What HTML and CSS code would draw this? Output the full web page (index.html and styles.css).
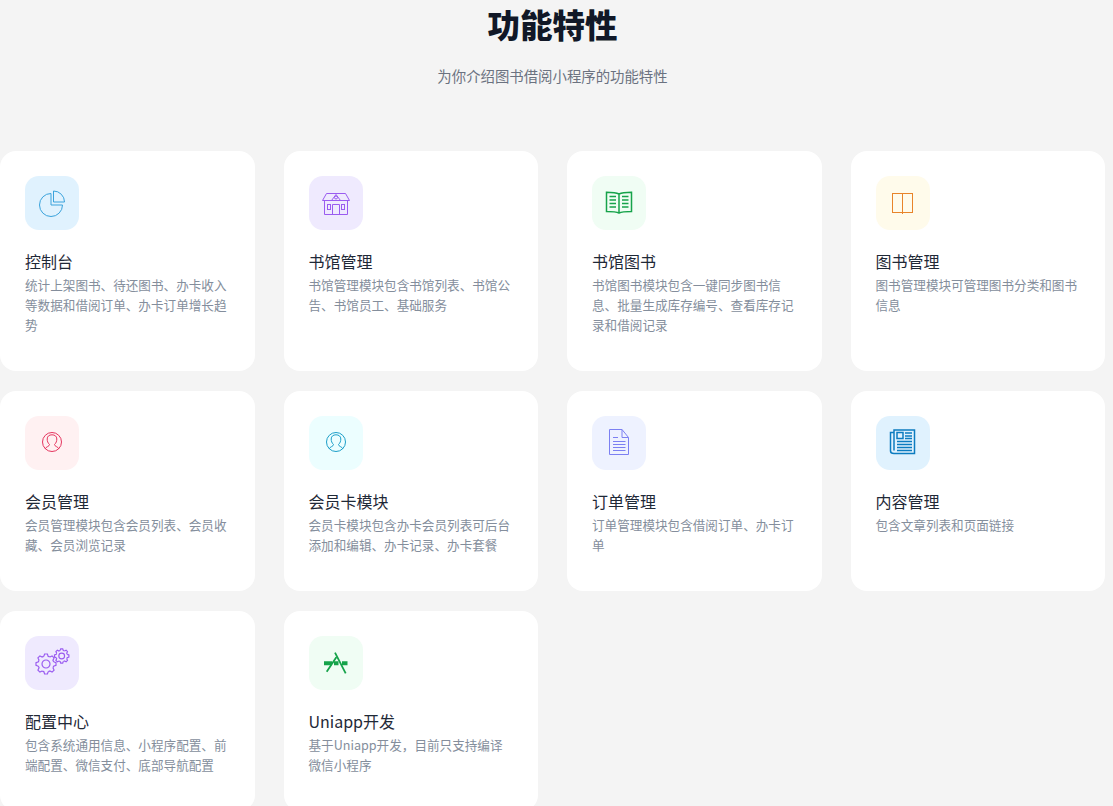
FILE: index.html
```html
<!DOCTYPE html>
<html lang="zh-CN">
<head>
  <meta charset="UTF-8">
  <meta name="viewport" content="width=device-width, initial-scale=1.0">
  <title>功能特性</title>
  <link rel="stylesheet" href="styles.css">
</head>
<body>
  <div class="page">
    <div class="head">
      <h1>功能特性</h1>
      <p>为你介绍图书借阅小程序的功能特性</p>
    </div>

    <div class="grid">
      <div class="card">
        <div class="icon sky">
          <svg viewBox="0 0 28 28"><path d="M13 4.500A11.500 11.500 0 1 0 24.500 16H13z"/><path d="M15.500 13V2a11 11 0 0 1 11 11z"/></svg>
        </div>
        <h3>控制台</h3>
        <p>统计上架图书、待还图书、办卡收入等数据和借阅订单、办卡订单增长趋势</p>
      </div>
      <div class="card">
        <div class="icon violet">
          <svg viewBox="0 0 28 28"><path d="M.5 11.500 4.500 4.500H23.500L27.500 11.500z"/><path d="M9.500 11.500 14 5.500 18.500 11.500"/><circle cx="14" cy="8.500" r="1.500"/><path d="M2.500 11.500V25.500H25.500V11.500"/><path d="M10.500 25.500V15.500H17.500V25.500"/><rect x="5.500" y="15.500" width="3" height="5"/><rect x="19.500" y="15.500" width="3" height="5"/></svg>
        </div>
        <h3>书馆管理</h3>
        <p>书馆管理模块包含书馆列表、书馆公告、书馆员工、基础服务</p>
      </div>
      <div class="card">
        <div class="icon green">
          <svg class="thick" viewBox="0 0 28 28"><path d="M14 5C11 3.500 6 3.300 1.500 3.300V22.500C6 22.500 11 22.500 14 24C17 22.500 22 22.500 26.500 22.500V3.300C22 3.300 17 3.500 14 5V24"/><path d="M4.500 7.500H11M4.500 11H11M4.500 14.500H11M4.500 18H11M17 7.500H23.500M17 11H23.500M17 14.500H23.500M17 18H23.500"/></svg>
        </div>
        <h3>书馆图书</h3>
        <p>书馆图书模块包含一键同步图书信息、批量生成库存编号、查看库存记录和借阅记录</p>
      </div>
      <div class="card">
        <div class="icon amber">
          <svg viewBox="0 0 28 28"><rect x="3.500" y="4.500" width="20" height="19"/><path d="M13.500 4.500V25"/></svg>
        </div>
        <h3>图书管理</h3>
        <p>图书管理模块可管理图书分类和图书信息</p>
      </div>

      <div class="card">
        <div class="icon rose">
          <svg viewBox="0 0 28 28"><circle cx="14" cy="13" r="9.500"/><path d="M7 20C8 17.500 11.500 17.500 11.500 15.500C9.800 14 9.200 12 9.200 10C9.200 7.200 11.200 5.800 14 5.800S18.800 7.200 18.800 10C18.800 12 18.200 14 16.500 15.500C16.500 17.500 20 17.500 21 20"/></svg>
        </div>
        <h3>会员管理</h3>
        <p>会员管理模块包含会员列表、会员收藏、会员浏览记录</p>
      </div>
      <div class="card">
        <div class="icon cyan">
          <svg viewBox="0 0 28 28"><circle cx="14" cy="13" r="9.500"/><path d="M7 20C8 17.500 11.500 17.500 11.500 15.500C9.800 14 9.200 12 9.200 10C9.200 7.200 11.200 5.800 14 5.800S18.800 7.200 18.800 10C18.800 12 18.200 14 16.500 15.500C16.500 17.500 20 17.500 21 20"/></svg>
        </div>
        <h3>会员卡模块</h3>
        <p>会员卡模块包含办卡会员列表可后台添加和编辑、办卡记录、办卡套餐</p>
      </div>
      <div class="card">
        <div class="icon indigo">
          <svg viewBox="0 0 28 28"><path d="M4.500 .5H17L23.500 8.500V25.500H4.500z"/><path d="M17 .5V8.500H23.500"/><path d="M8 8.500H13M8 12.500H20.500M8 15.500H20.500M8 18.500H20.500M8 21.500H20.500"/></svg>
        </div>
        <h3>订单管理</h3>
        <p>订单管理模块包含借阅订单、办卡订单</p>
      </div>
      <div class="card">
        <div class="icon blue">
          <svg class="thick" viewBox="0 0 28 28"><path d="M5 3.500V1H25.500V24.500H5C3 24.500 1.500 23.500 1.500 22V3.500H5V21.500"/><rect x="8" y="3.500" width="6" height="6"/><path d="M16 4H23M16 7H23M16 9.500H23M8 12.500H23M8 15.500H23M8 18.500H23M8 21.500H23"/></svg>
        </div>
        <h3>内容管理</h3>
        <p>包含文章列表和页面链接</p>
      </div>

      <div class="card">
        <div class="icon violet">
          <svg class="gears" viewBox="0 0 28 28">
            <defs>
              <path id="tooth" d="M-2.200-7.600-1.400-10H1.400L2.200-7.600A7.900 7.900 0 0 1 3.820-6.930"/>
              <g id="gear">
                <use href="#tooth"/>
                <use href="#tooth" transform="rotate(45)"/>
                <use href="#tooth" transform="rotate(90)"/>
                <use href="#tooth" transform="rotate(135)"/>
                <use href="#tooth" transform="rotate(180)"/>
                <use href="#tooth" transform="rotate(225)"/>
                <use href="#tooth" transform="rotate(270)"/>
                <use href="#tooth" transform="rotate(315)"/>
                <circle r="4"/>
              </g>
            </defs>
            <use href="#gear" transform="translate(8 15)"/>
            <use class="small" href="#gear" transform="translate(23.700 7) scale(.72)"/>
          </svg>
        </div>
        <h3>配置中心</h3>
        <p>包含系统通用信息、小程序配置、前端配置、微信支付、底部导航配置</p>
      </div>
      <div class="card">
        <div class="icon green">
          <svg class="appstore" viewBox="0 0 28 28"><path class="bar" d="M2 14.300H10M12 14.300H16.500M20 14.300H25.500"/><path d="M13 3.700 23.700 24.300M14.300 8.300 4.700 22.700"/></svg>
        </div>
        <h3>Uniapp开发</h3>
        <p>基于Uniapp开发，目前只支持编译微信小程序</p>
      </div>
    </div>
  </div>
</body>
</html>
```

FILE: styles.css
```css
* { box-sizing: border-box; }
html { overflow: hidden; }
body { margin: 0; background: #f4f4f4; font-family: "Noto Sans CJK SC", "Noto Sans", sans-serif; }
.page { padding: 0 8px 0 0; }

.head { text-align: center; margin-bottom: 65px; }
.head h1 { margin: 0; font-size: 32.5px; line-height: 48px; font-weight: 900; color: #111827; }
.head p { margin: 18px 0 0; font-size: 14.4px; line-height: 20px; color: #6b7280; }

.grid { display: grid; grid-template-columns: repeat(4, 1fr); gap: 20px 29px; }
.card { background: #fff; border-radius: 16px; padding: 25px 25px 36px; }
.card h3 { margin: 18px 0 1px; font-size: 16px; line-height: 26px; font-weight: 400; color: #1f2937; }
.card p { margin: 0; font-size: 12.6px; line-height: 20px; color: #848e9c; }

.icon { width: 54px; height: 54px; border-radius: 14px; display: flex; align-items: center; justify-content: center; }
.icon svg { width: 28px; height: 28px; overflow: visible; fill: none; stroke: currentColor; stroke-width: 1; }
.icon svg.thick { stroke-width: 1.5; }
.icon svg.gears { stroke-width: 1.2; }
.icon svg.gears .small { stroke-width: 1.6; }
.icon svg.appstore { stroke-width: 1.8; }
.icon .appstore .bar { stroke-width: 4; }

.sky { background: #e0f2fe; color: #3aa3dc; }
.violet { background: #efeafe; color: #9a5cf0; }
.green { background: #f0fdf4; color: #16a34a; }
.amber { background: #fffbeb; color: #e8842a; }
.rose { background: #fff1f2; color: #e5355f; }
.cyan { background: #ecfeff; color: #1c9fc9; }
.indigo { background: #eef2ff; color: #7c80f2; }
.blue { background: #e0f2fe; color: #0c7cc0; }
```
